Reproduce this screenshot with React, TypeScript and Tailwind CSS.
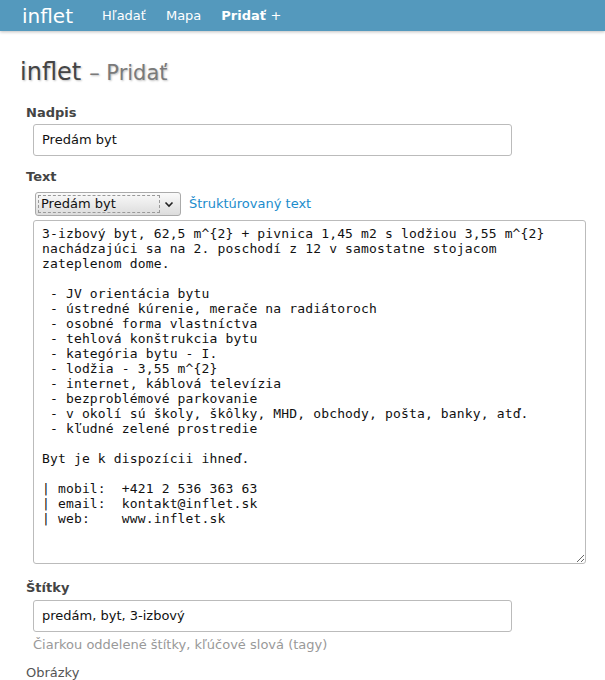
const textBody = `3-izbový byt, 62,5 m^{2} + pivnica 1,45 m2 s lodžiou 3,55 m^{2}
nachádzajúci sa na 2. poschodí z 12 v samostatne stojacom
zateplenom dome.

 - JV orientácia bytu
 - ústredné kúrenie, merače na radiátoroch
 - osobné forma vlastníctva
 - tehlová konštrukcia bytu
 - kategória bytu - I.
 - lodžia - 3,55 m^{2}
 - internet, káblová televízia
 - bezproblémové parkovanie
 - v okolí sú školy, škôlky, MHD, obchody, pošta, banky, atď.
 - kľudné zelené prostredie

Byt je k dispozícii ihneď.

| mobil:  +421 2 536 363 63
| email:  kontakt@inflet.sk
| web:    www.inflet.sk`;

function Navbar() {
  return (
    <header className="flex h-[31px] items-center bg-[#5499bd] shadow-[0_1px_3px_rgba(0,0,0,0.25)]">
      <span className="ml-[22px] text-[20px] leading-none text-white">inflet</span>
      <nav className="ml-[29px] flex items-center gap-[20px] text-[13px] text-white">
        <a>Hľadať</a>
        <a>Mapa</a>
        <a className="font-bold">
          Pridať <span className="font-normal">+</span>
        </a>
      </nav>
    </header>
  );
}

export default function App() {
  return (
    <div className="min-h-screen bg-white font-['DejaVu_Sans',Verdana,sans-serif] text-[13px] text-[#333]">
      <Navbar />

      <main className="px-[20px] pt-[26px]">
        <h1 className="flex items-baseline gap-[8px] [text-shadow:1px_1px_2px_rgba(0,0,0,0.25)]">
          <span className="text-[24px] leading-[30px] text-[#444]">inflet</span>
          <span className="text-[21px] text-[#7a7a7a]">– Pridať</span>
        </h1>

        <form className="mt-[15px] pl-[6px]">
          <label className="block font-bold leading-[16px] text-[#444]">Nadpis</label>
          <input
            defaultValue="Predám byt"
            className="ml-[7px] mt-[3px] block h-[32px] w-[479px] rounded-[3px] border border-[#bbb] px-[8px] text-[#111] outline-none"
          />

          <label className="mt-[13px] block font-bold leading-[16px] text-[#444]">Text</label>
          <div className="ml-[9px] mt-[7px] flex items-center gap-[8px]">
            <div className="flex h-[24px] w-[146px] items-center justify-between rounded-[3px] border border-[#aaa] bg-gradient-to-b from-[#fafafa] to-[#dcdcdc] px-[2px]">
              <span className="flex h-[18px] flex-1 items-center border border-dashed border-[#999] pl-[2px] text-[#111]">
                Predám byt
              </span>
              <svg width="12" height="12" viewBox="0 0 12 12" className="mx-[3px]">
                <path d="M2.5 4.5 6 8l3.5-3.5" fill="none" stroke="#222" strokeWidth="1.6" />
              </svg>
            </div>
            <a className="text-[#1b8ccc]">Štruktúrovaný text</a>
          </div>

          <textarea
            spellCheck={false}
            defaultValue={textBody}
            className="ml-[7px] mt-[4px] block h-[344px] w-[553px] resize-y rounded-[3px] border border-[#bbb] px-[8px] py-[5px] font-['DejaVu_Sans_Mono',monospace] text-[13px] leading-[15px] tracking-[0.15px] text-[#111] outline-none"
          />

          <label className="mt-[16px] block font-bold leading-[16px] text-[#444]">Štítky</label>
          <input
            spellCheck={false}
            defaultValue="predám, byt, 3-izbový"
            className="ml-[7px] mt-[4px] block h-[32px] w-[479px] rounded-[3px] border border-[#bbb] px-[8px] text-[#111] outline-none"
          />
          <p className="ml-[7px] mt-[5px] leading-[16px] text-[#999]">
            Čiarkou oddelené štítky, kľúčové slová (tagy)
          </p>

          <p className="mt-[12px] leading-[16px] text-[#555]">Obrázky</p>
        </form>
      </main>
    </div>
  );
}
